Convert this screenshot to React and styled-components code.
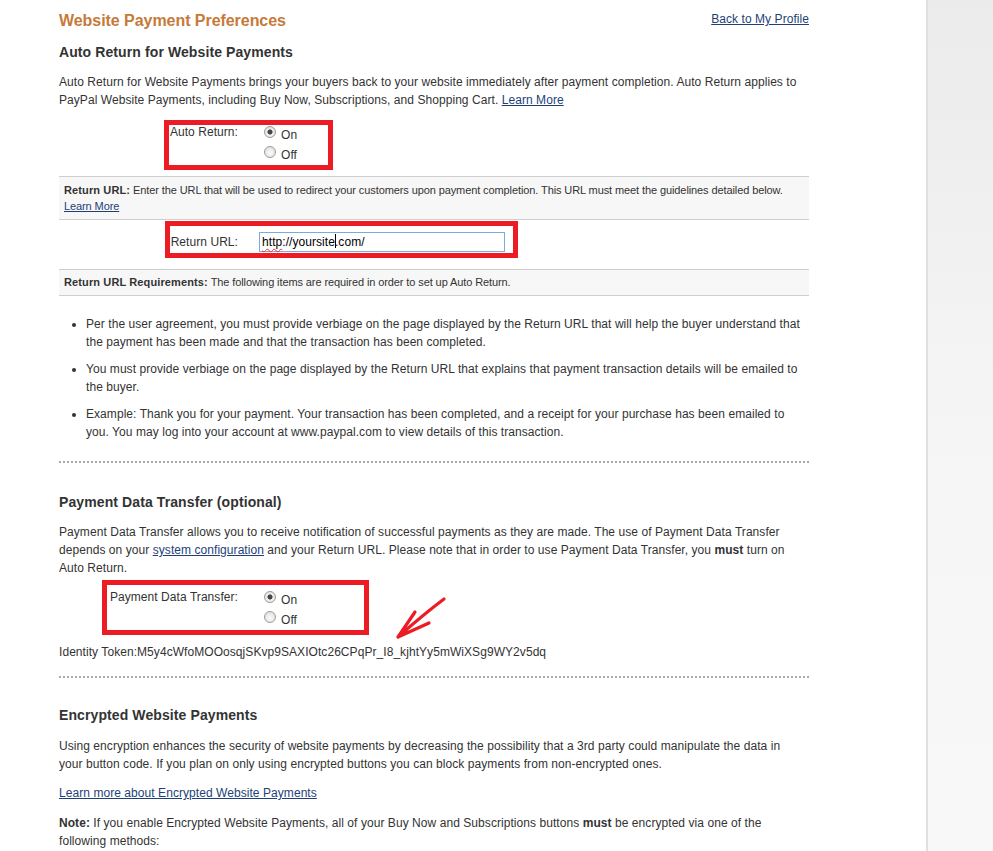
import React from 'react';
import styled, { createGlobalStyle } from 'styled-components';

const GlobalStyle = createGlobalStyle`
  html, body, #root {
    height: 100%;
  }
  body {
    margin: 0;
    background: #fff;
    color: #333;
    font-family: "Liberation Sans", Arial, sans-serif;
  }
`;

const Page = styled.div`
  display: flex;
  min-height: 100vh;
`;

const Main = styled.main`
  width: 750px;
  margin-left: 59px;
  padding-top: 11px;
  font-size: 12px;
  line-height: 18px;
  letter-spacing: 0.06px;
`;

const Sidebar = styled.aside`
  margin-left: auto;
  width: 65px;
  border-left: 2px solid #e0e0e0;
  background: linear-gradient(#ebebeb, #f6f6f6 55%, #f8f8f8);
`;

const Header = styled.div`
  display: flex;
  justify-content: space-between;
  align-items: flex-start;
`;

const Title = styled.h1`
  margin: 0;
  font-size: 16px;
  line-height: 20px;
  font-weight: bold;
  letter-spacing: -0.05px;
  color: #c67a3a;
`;

const Link = styled.a`
  color: #1e3f78;
  text-decoration: underline;
  cursor: pointer;
`;

const TopLink = styled(Link)`
  margin-top: 1px;
  line-height: 14px;
`;

const SectionTitle = styled.h2`
  margin: ${p => p.$mt}px 0 0;
  font-size: 14px;
  line-height: 18px;
  font-weight: bold;
  letter-spacing: 0.1px;
  color: #333;
`;

const Text = styled.p`
  margin: ${p => p.$mt ?? 12}px 0 0;
`;

const Highlight = styled.div`
  position: relative;
  box-sizing: border-box;
  width: ${p => p.$width}px;
  margin: ${p => p.$mt}px 0 0 ${p => p.$left}px;
  padding: ${p => p.$pt || 0}px 0 ${p => p.$pb || 0}px;
  border: 5px solid #ed1c24;
`;

const Field = styled.div`
  display: grid;
  grid-template-columns: ${p => p.$labelWidth}px auto;
  column-gap: 20px;
  align-items: ${p => (p.$center ? 'center' : 'start')};
`;

const FieldLabel = styled.label`
  text-align: right;
  white-space: nowrap;
  line-height: ${p => (p.$center ? 20 : 14)}px;
`;

const RadioGroup = styled.div`
  display: flex;
  flex-direction: column;
`;

const RadioOption = styled.label`
  display: flex;
  align-items: flex-start;
  height: 20px;
  line-height: 20px;
`;

const Radio = styled.input`
  appearance: none;
  box-sizing: border-box;
  width: 12px;
  height: 12px;
  margin: 1px 5px 0 6px;
  border: 1px solid #9c9c9c;
  border-radius: 50%;
  background: radial-gradient(circle at 50% 60%, #fbfbfb, #d9d9d9);

  &:checked {
    background: radial-gradient(circle, #474747 0 2.2px, transparent 2.9px),
      radial-gradient(circle at 50% 60%, #fbfbfb, #d9d9d9);
  }
`;

const UrlBox = styled.div`
  box-sizing: border-box;
  width: 246px;
  height: 20px;
  margin-left: 1px;
  padding: 0 2px;
  border: 1px solid #7fa9d8;
  background: #fff;
  color: #000;
  line-height: 18px;
  white-space: nowrap;
`;

const Misspelled = styled.span`
  text-decoration: underline wavy #e33;
  text-decoration-thickness: 1px;
  text-underline-offset: 2px;
`;

const Caret = styled.span`
  display: inline-block;
  width: 1px;
  height: 14px;
  margin-right: -1px;
  background: #000;
  vertical-align: -2px;
`;

const Band = styled.div`
  margin-top: ${p => p.$mt}px;
  padding: ${p => p.$pt}px 5px ${p => p.$pb}px;
  border-top: 1px solid #cfcfcf;
  border-bottom: 1px solid #cfcfcf;
  background: #f7f7f7;
  font-size: 11px;
  line-height: 16px;
  letter-spacing: -0.1px;

  b {
    letter-spacing: 0.12px;
  }
`;

const Requirements = styled.ul`
  margin: 19px 0 0;
  padding-left: 27px;

  li + li {
    margin-top: 9px;
  }
`;

const Divider = styled.hr`
  margin: ${p => p.$mt}px 0 0;
  height: 0;
  border: 0;
  border-top: 2px dotted #aaa;
`;

const Arrow = styled.svg`
  position: absolute;
  left: 287px;
  top: 9px;
  overflow: visible;
`;

function RadioField({ name, label, labelWidth }) {
  return (
    <Field $labelWidth={labelWidth}>
      <FieldLabel>{label}</FieldLabel>
      <RadioGroup>
        <RadioOption>
          <Radio type="radio" name={name} defaultChecked />
          On
        </RadioOption>
        <RadioOption>
          <Radio type="radio" name={name} />
          Off
        </RadioOption>
      </RadioGroup>
    </Field>
  );
}

export default function App() {
  return (
    <Page>
      <GlobalStyle />
      <Main>
        <Header>
          <Title>Website Payment Preferences</Title>
          <TopLink>Back to My Profile</TopLink>
        </Header>

        <SectionTitle $mt={12}>Auto Return for Website Payments</SectionTitle>
        <Text>
          Auto Return for Website Payments brings your buyers back to your website immediately after
          payment completion. Auto Return applies to PayPal Website Payments, including Buy Now,
          Subscriptions, and Shopping Cart. <Link>Learn More</Link>
        </Text>

        <Highlight $left={105} $width={169} $mt={11}>
          <RadioField name="autoReturn" label="Auto Return:" labelWidth={69} />
        </Highlight>

        <Band $mt={6} $pt={5} $pb={5}>
          <b>Return URL:</b> Enter the URL that will be used to redirect your customers upon payment
          completion. This URL must meet the guidelines detailed below.
          <br />
          <Link>Learn More</Link>
        </Band>

        <Highlight $left={106} $width={353} $mt={1} $pt={6} $pb={1}>
          <Field $labelWidth={68} $center>
            <FieldLabel $center>Return URL:</FieldLabel>
            <UrlBox>
              <Misspelled>http</Misspelled>://yoursite<Caret />.com/
            </UrlBox>
          </Field>
        </Highlight>

        <Band $mt={11} $pt={4} $pb={5}>
          <b>Return URL Requirements:</b> The following items are required in order to set up Auto
          Return.
        </Band>

        <Requirements>
          <li>
            Per the user agreement, you must provide verbiage on the page displayed by the Return URL
            that will help the buyer understand that the payment has been made and that the
            transaction has been completed.
          </li>
          <li>
            You must provide verbiage on the page displayed by the Return URL that explains that
            payment transaction details will be emailed to the buyer.
          </li>
          <li>
            Example: Thank you for your payment. Your transaction has been completed, and a receipt
            for your purchase has been emailed to
            <br />
            you. You may log into your account at www.paypal.com to view details of this transaction.
          </li>
        </Requirements>

        <Divider $mt={20} />

        <SectionTitle $mt={30}>Payment Data Transfer (optional)</SectionTitle>
        <Text>
          Payment Data Transfer allows you to receive notification of successful payments as they are
          made. The use of Payment Data Transfer depends on your <Link>system configuration</Link> and
          your Return URL. Please note that in order to use Payment Data Transfer, you <b>must</b> turn
          on
          <br />
          Auto Return.
        </Text>

        <Highlight $left={43} $width={267} $mt={3} $pt={5}>
          <RadioField name="pdt" label="Payment Data Transfer:" labelWidth={131} />
          <Arrow width="54" height="47" viewBox="0 0 54 47" fill="none">
            <path
              d="M50 5 Q 30 20 4 43 M4 43 L21 18 M4 43 L35 29"
              stroke="#ed1c24"
              strokeWidth="3.2"
              strokeLinecap="round"
              strokeLinejoin="round"
            />
          </Arrow>
        </Highlight>

        <Text $mt={8}>Identity Token:M5y4cWfoMOOosqjSKvp9SAXIOtc26CPqPr_I8_kjhtYy5mWiXSg9WY2v5dq</Text>

        <Divider $mt={15} />

        <SectionTitle $mt={28}>Encrypted Website Payments</SectionTitle>
        <Text $mt={13}>
          Using encryption enhances the security of website payments by decreasing the possibility
          that a 3rd party could manipulate the data in
          <br />
          your button code. If you plan on only using encrypted buttons you can block payments from
          non-encrypted ones.
        </Text>
        <Text $mt={11}>
          <Link>Learn more about Encrypted Website Payments</Link>
        </Text>
        <Text>
          <b>Note:</b> If you enable Encrypted Website Payments, all of your Buy Now and Subscriptions
          buttons <b>must</b> be encrypted via one of the
          <br />
          following methods:
        </Text>
      </Main>
      <Sidebar />
    </Page>
  );
}
